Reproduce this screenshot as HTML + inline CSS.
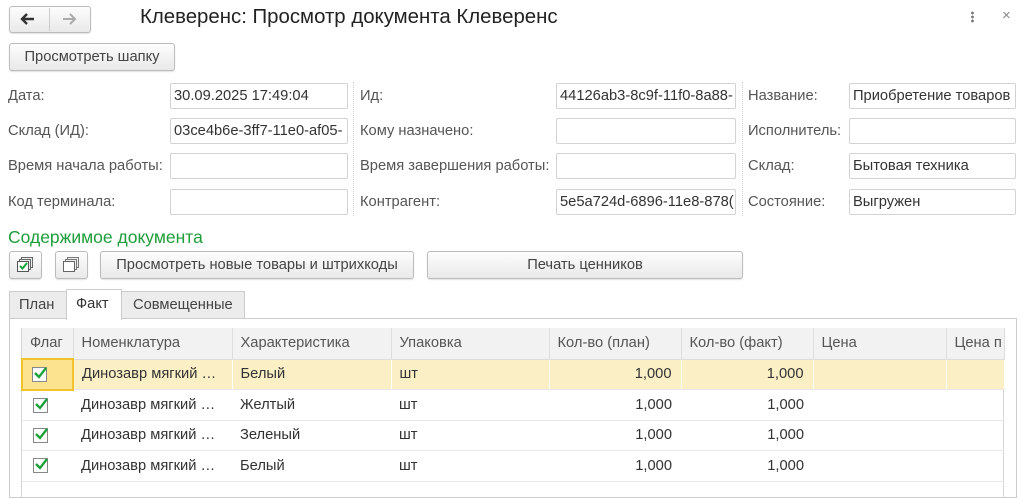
<!DOCTYPE html>
<html><head><meta charset="utf-8"><style>
*{box-sizing:border-box;margin:0;padding:0}
body{width:1024px;height:494px;overflow:hidden;background:#fff;font-family:"Liberation Sans","Noto Sans CJK SC",sans-serif;font-size:14.7px;color:#4d4d4d;position:relative}
.a{position:absolute}
.btn{position:absolute;border:1px solid #bcbcbc;border-radius:3px;background:linear-gradient(#fdfdfd,#e9e9e9);box-shadow:0 1px 1px rgba(0,0,0,.12);color:#444;text-align:center;font-size:14.7px}
.lbl{position:absolute;font-size:14.7px;color:#555}
.inp{position:absolute;height:26px;border:1px solid #d3d3d3;border-radius:2px;background:#fff;color:#333;font-size:14.7px;padding:4px 0 0 3px;white-space:nowrap;overflow:hidden}
.sep{position:absolute;top:82px;height:134px;border-left:1px dotted #cfcfcf}
table{position:absolute;left:21px;top:328px;width:982px;border-collapse:collapse;table-layout:fixed;font-size:14.7px}
th{background:#f2f2f2;font-weight:normal;text-align:left;height:31px;border-right:1px solid #ddd;border-bottom:1px solid #ddd;padding-left:8px;color:#555;white-space:nowrap;overflow:hidden}
td{height:30.5px;border-bottom:1px solid #e8e8e8;padding-left:8px;color:#333;white-space:nowrap;overflow:hidden}
tr.sel td{background:#fbf0c5;border-right:1px solid #fff}
td.r{text-align:right;padding-right:9px}
.cb{display:inline-block;width:15px;height:15px;border:1px solid #888;background:#fff;position:relative;top:2px;margin-left:3px}
</style></head><body>
<div class="btn" style="left:9px;top:6px;width:82px;height:27px"></div>
<div class="a" style="left:49px;top:8px;height:23px;border-left:1px solid #ccc"></div>
<svg class="a" style="left:20px;top:12px" width="16" height="14"><path d="M2 7h12M7 2L2 7l5 5" stroke="#333" stroke-width="2.4" fill="none"/></svg>
<svg class="a" style="left:61px;top:12px" width="16" height="14"><path d="M2 7h12M9 2l5 5-5 5" stroke="#aaa" stroke-width="2" fill="none"/></svg>
<div class="a" style="left:140px;top:6px;font-size:20.4px;color:#222">Клеверенс: Просмотр документа Клеверенс</div>
<div class="a" style="left:971px;top:11px;width:3px;height:12px;background:radial-gradient(circle,#777 1.3px,transparent 1.5px) 0 0/3px 4px"></div>
<div class="a" style="left:1002px;top:7px;font-size:15px;color:#888">×</div>
<div class="btn" style="left:9px;top:43px;width:166px;height:28px;padding-top:5px">Просмотреть шапку</div>

<div class="lbl" style="left:8px;top:88px">Дата:</div>
<div class="lbl" style="left:8px;top:123px">Склад (ИД):</div>
<div class="lbl" style="left:8px;top:158px">Время начала работы:</div>
<div class="lbl" style="left:8px;top:194px">Код терминала:</div>
<div class="inp" style="left:170px;top:83px;width:178px">30.09.2025 17:49:04</div>
<div class="inp" style="left:170px;top:118px;width:178px">03ce4b6e-3ff7-11e0-af05-</div>
<div class="inp" style="left:170px;top:153px;width:178px"></div>
<div class="inp" style="left:170px;top:189px;width:178px"></div>
<div class="sep" style="left:353px"></div>
<div class="lbl" style="left:360px;top:88px">Ид:</div>
<div class="lbl" style="left:360px;top:123px">Кому назначено:</div>
<div class="lbl" style="left:360px;top:158px">Время завершения работы:</div>
<div class="lbl" style="left:360px;top:194px">Контрагент:</div>
<div class="inp" style="left:556px;top:83px;width:180px">44126ab3-8c9f-11f0-8a88-</div>
<div class="inp" style="left:556px;top:118px;width:180px"></div>
<div class="inp" style="left:556px;top:153px;width:180px"></div>
<div class="inp" style="left:556px;top:189px;width:180px">5e5a724d-6896-11e8-878(</div>
<div class="sep" style="left:742px"></div>
<div class="lbl" style="left:748px;top:88px">Название:</div>
<div class="lbl" style="left:748px;top:123px">Исполнитель:</div>
<div class="lbl" style="left:748px;top:158px">Склад:</div>
<div class="lbl" style="left:748px;top:194px">Состояние:</div>
<div class="inp" style="left:849px;top:83px;width:167px">Приобретение товаров</div>
<div class="inp" style="left:849px;top:118px;width:167px"></div>
<div class="inp" style="left:849px;top:153px;width:167px">Бытовая техника</div>
<div class="inp" style="left:849px;top:189px;width:167px">Выгружен</div>

<div class="a" style="left:8px;top:227px;font-size:17.5px;color:#1f9d3a">Содержимое документа</div>
<div class="btn" style="left:9px;top:251px;width:33px;height:28px"></div>
<svg class="a" style="left:17px;top:257px" width="17" height="16"><rect x="4.5" y="0.5" width="11" height="10" fill="#eee" stroke="#666"/><rect x="2.5" y="2.5" width="11" height="10" fill="#eee" stroke="#666"/><rect x="0.5" y="4.5" width="11" height="10" fill="#fff" stroke="#555"/><path d="M3 9l2.5 2.5L10 6" stroke="#1ca23a" stroke-width="2" fill="none"/></svg>
<div class="btn" style="left:55px;top:251px;width:33px;height:28px"></div>
<svg class="a" style="left:63px;top:257px" width="17" height="16"><rect x="4.5" y="0.5" width="11" height="10" fill="#eee" stroke="#777"/><rect x="2.5" y="2.5" width="11" height="10" fill="#eee" stroke="#777"/><rect x="0.5" y="4.5" width="11" height="10" fill="#fff" stroke="#666"/></svg>
<div class="btn" style="left:100px;top:251px;width:314px;height:28px;padding-top:5px">Просмотреть новые товары и штрихкоды</div>
<div class="btn" style="left:427px;top:251px;width:316px;height:28px;padding-top:5px">Печать ценников</div>

<div class="a" style="left:9px;top:291px;width:58px;height:28px;background:#ececec;border:1px solid #ccc;padding:5px 0 0 9px;color:#444">План</div>
<div class="a" style="left:121px;top:291px;width:124px;height:28px;background:#ececec;border:1px solid #ccc;padding:5px 0 0 11px;color:#444">Совмещенные</div>
<div class="a" style="left:9px;top:318px;width:1008px;height:180px;border:1px solid #ccc"></div>
<div class="a" style="left:66px;top:289px;width:56px;height:31px;background:#fff;border:1px solid #ccc;border-bottom:none;padding:6px 0 0 9px;color:#333">Факт</div>
<div class="a" style="left:21px;top:328px;width:983px;height:170px;border:1px solid #d6d6d6;border-bottom:none"></div>
<table>
<colgroup><col style="width:51px"><col style="width:159px"><col style="width:159px"><col style="width:158px"><col style="width:132px"><col style="width:132px"><col style="width:133px"><col style="width:58px"></colgroup>
<tr><th>Флаг</th><th>Номенклатура</th><th>Характеристика</th><th>Упаковка</th><th>Кол-во (план)</th><th>Кол-во (факт)</th><th>Цена</th><th>Цена п</th></tr>
<tr class="sel"><td style="background:#fbe38f;border:2px solid #f2c12e;padding-left:6px"><span class="cb"><svg width="15" height="14" style="position:absolute;left:0;top:-2px"><path d="M2 7l4 4 7-9" stroke="#1ca23a" stroke-width="2.4" fill="none"/></svg></span></td><td>Динозавр мягкий …</td><td>Белый</td><td>шт</td><td class="r">1,000</td><td class="r">1,000</td><td></td><td></td></tr>
<tr><td><span class="cb"><svg width="15" height="14" style="position:absolute;left:0;top:-2px"><path d="M2 7l4 4 7-9" stroke="#1ca23a" stroke-width="2.4" fill="none"/></svg></span></td><td>Динозавр мягкий …</td><td>Желтый</td><td>шт</td><td class="r">1,000</td><td class="r">1,000</td><td></td><td></td></tr>
<tr><td><span class="cb"><svg width="15" height="14" style="position:absolute;left:0;top:-2px"><path d="M2 7l4 4 7-9" stroke="#1ca23a" stroke-width="2.4" fill="none"/></svg></span></td><td>Динозавр мягкий …</td><td>Зеленый</td><td>шт</td><td class="r">1,000</td><td class="r">1,000</td><td></td><td></td></tr>
<tr><td><span class="cb"><svg width="15" height="14" style="position:absolute;left:0;top:-2px"><path d="M2 7l4 4 7-9" stroke="#1ca23a" stroke-width="2.4" fill="none"/></svg></span></td><td>Динозавр мягкий …</td><td>Белый</td><td>шт</td><td class="r">1,000</td><td class="r">1,000</td><td></td><td></td></tr>
</table>
</body></html>
